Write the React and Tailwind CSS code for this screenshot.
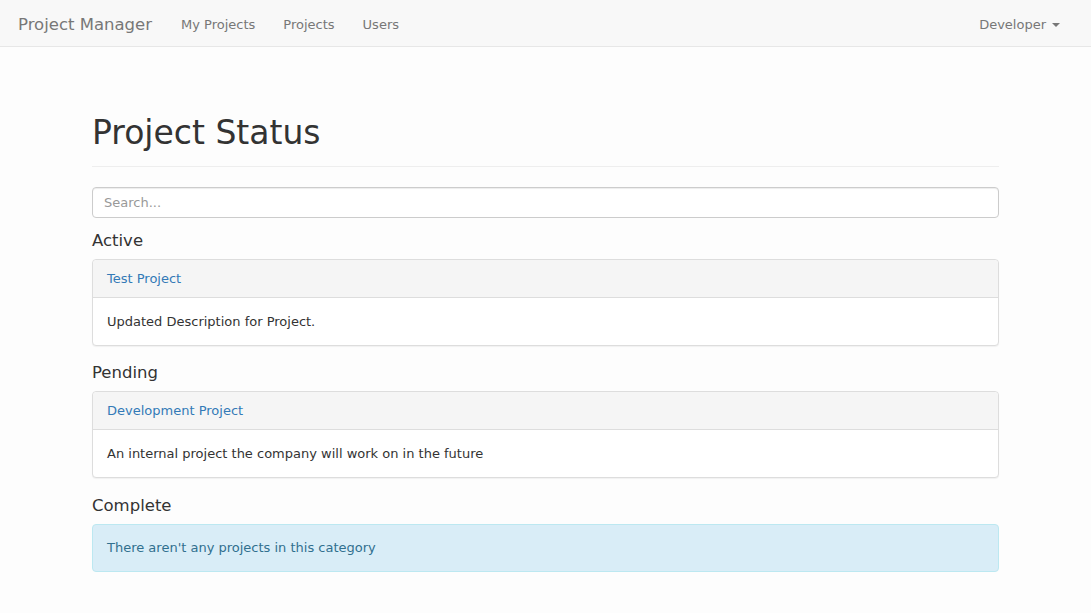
import React from 'react';

const sections = [
  { title: 'Active', projects: [{ name: 'Test Project', description: 'Updated Description for Project.' }] },
  { title: 'Pending', projects: [{ name: 'Development Project', description: 'An internal project the company will work on in the future' }] },
  { title: 'Complete', projects: [] },
];

const Navbar = () => (
  <nav className="h-[47px] pt-[3px] bg-[#f8f8f8] border-b border-[#e7e7e7] flex items-center text-[#777]">
    <span className="pl-[18px] pr-[15px] text-[16.5px] mt-[1px]">Project Manager</span>
    <a className="px-[14px] text-[13px]">My Projects</a>
    <a className="px-[14px] text-[13px]">Projects</a>
    <a className="px-[14px] text-[13px]">Users</a>
    <div className="ml-auto pr-[31px] text-[13px] flex items-center">
      Developer
      <span className="ml-[6px] w-0 h-0 border-l-[4px] border-r-[4px] border-t-[4px] border-l-transparent border-r-transparent border-t-[#777]" />
    </div>
  </nav>
);

const Section = ({ section, first }) => {
  const empty = section.projects.length === 0;
  return (
    <div>
      <h4 className={`${first ? 'mt-[13px]' : empty ? 'mt-[18px]' : 'mt-[17px]'} mb-[8px] text-[16.5px] leading-[20px] text-[#333]`}>
        {section.title}
      </h4>
      {!empty ? (
        section.projects.map((project) => (
          <div key={project.name} className="border border-[#ddd] rounded-[4px] bg-white shadow-[0_1px_1px_rgba(0,0,0,0.05)]">
            <div className="bg-[#f5f5f5] border-b border-[#ddd] rounded-t-[4px] px-[14px] pt-[10px] pb-[9px] text-[13px] leading-[18px]">
              <a className="text-[#337ab7]">{project.name}</a>
            </div>
            <div className="px-[14px] pt-[15px] pb-[14px] text-[13px] leading-[18px] text-[#333]">{project.description}</div>
          </div>
        ))
      ) : (
        <div className="bg-[#d9edf7] border border-[#bce8f1] rounded-[4px] px-[14px] py-[14px] text-[13px] leading-[18px] text-[#31708f]">
          There aren't any projects in this category
        </div>
      )}
    </div>
  );
};

const App = () => {
  return (
    <div className="min-h-[613px] bg-[#fdfdfd] font-['DejaVu_Sans',sans-serif]">
      <Navbar />
      <div className="w-[907px] ml-[92px]">
        <div className="mt-[68px] pb-[15px] border-b border-[#eee]">
          <h1 className="text-[33px] leading-[36px] text-[#333]">Project Status</h1>
        </div>
        <input
          type="text"
          placeholder="Search..."
          className="mt-[20px] block w-full h-[31px] px-[11px] text-[13px] border border-[#ccc] rounded-[4px] bg-white shadow-[inset_0_1px_1px_rgba(0,0,0,0.075)] placeholder:text-[#999] outline-none"
        />
        {sections.map((section, i) => (
          <Section key={section.title} section={section} first={i === 0} />
        ))}
      </div>
    </div>
  );
};

export default App;
